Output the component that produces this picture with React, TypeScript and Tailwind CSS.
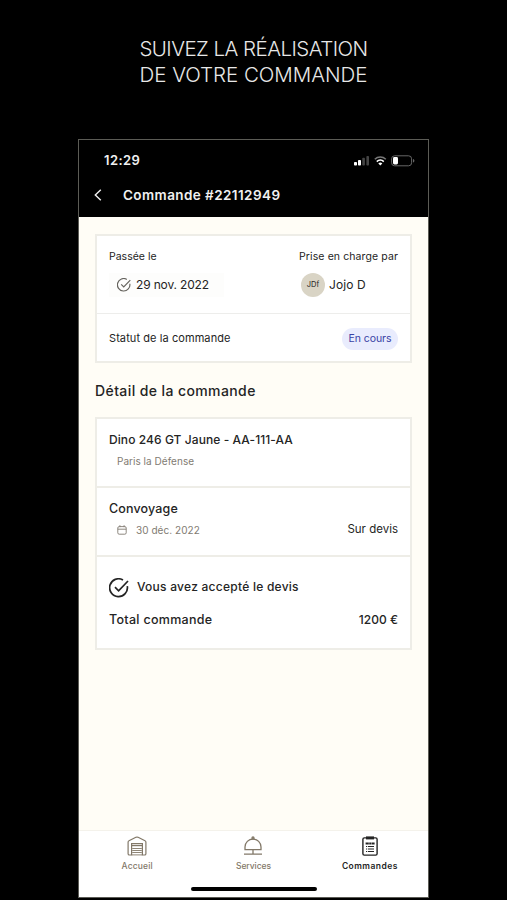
import type { ReactNode } from "react";

function BackIcon() {
  return (
    <svg viewBox="0 0 8 12" fill="none" stroke="currentColor" strokeWidth="1.4" className="mb-px h-3 w-2">
      <path d="M6.8.7 1.300 6l5.500 5.300" />
    </svg>
  );
}

function CheckCircle({ className }: { className?: string }) {
  return (
    <svg viewBox="0 0 20 20" fill="none" stroke="currentColor" strokeWidth="1.7" className={className}>
      <path d="M18.3 8.2A8.9 8.9 0 1 1 14 2" />
      <path d="M6 9.2 9.6 12.8 19 3" />
    </svg>
  );
}

function CalendarIcon() {
  return (
    <svg viewBox="0 0 10 10" fill="none" stroke="currentColor" strokeWidth="0.9" className="size-[10px]">
      <rect x="0.8" y="1.6" width="8.4" height="7.6" rx="1.4" />
      <path d="M0.8 4.2h8.4M2.9 0.2v2M7.1 0.2v2" />
    </svg>
  );
}

function GarageIcon() {
  return (
    <svg viewBox="0 0 20 20" fill="none" stroke="currentColor" strokeWidth="1.2" className="size-5">
      <path d="M2.4 19q-1.3 0-1.3-1.3V6.2q0-1 .9-1.4L8.900 1.300q1.100-.5 2.200 0L18 4.800q.9.4.9 1.400v11.500q0 1.300-1.300 1.300h-2.200V7.600H4.600V19z" />
      <path d="M4.600 9.600h10.800" />
      <path d="M5.200 12.500h9.600M5.200 14.500h9.600M5.200 16.500h9.600M4.600 18.900h10.800" strokeWidth="0.9" />
    </svg>
  );
}

function BellIcon() {
  return (
    <svg viewBox="0 0 20 20" fill="none" stroke="currentColor" strokeWidth="1.3" className="size-5">
      <path d="M2 13.6V11a8 8 0 0 1 16 0v2.6zM10 13.6v4M1 18.1h18" />
      <circle cx="10" cy="2" r="1" />
    </svg>
  );
}

function ClipboardIcon() {
  return (
    <svg viewBox="0 0 20 20" fill="none" stroke="currentColor" strokeWidth="1.4" className="size-5">
      <rect x="2.9" y="1.9" width="14.2" height="17.2" rx="1.4" />
      <path d="M6 1.9h8" strokeWidth="3" />
      <path d="M5.600 7.500h3.200M9.200 7.500h2.400M12 7.500h2.600" strokeWidth="2" />
      <path d="M6 10.500h1.200M8 10.500h6M6 13h1.200M8 13h6M6 15.500h1.200M8 15.500h6" strokeWidth="1" />
    </svg>
  );
}

function StatusIcons() {
  return (
    <svg viewBox="0 0 62 12" fill="none" className="h-3 w-[62px]">
      <rect x="1" y="7" width="3" height="3.5" rx="0.8" fill="#fff" />
      <rect x="5" y="5" width="3" height="5.5" rx="0.8" fill="#fff" />
      <rect x="9.3" y="2.8" width="2.6" height="7.7" rx="0.8" fill="#444" />
      <rect x="13.4" y="1" width="2.6" height="9.5" rx="0.8" fill="#444" />
      <path d="M21.8 4.2a7.8 7.8 0 0 1 11 0" stroke="#777" strokeWidth="1.5" />
      <path d="M23.8 6.6a5 5 0 0 1 7 0" stroke="#fff" strokeWidth="1.6" />
      <path d="m25.3 8.5 2 2 2-2a2.8 2.8 0 0 0-4 0Z" fill="#fff" />
      <rect x="38.6" y="0.8" width="20" height="10" rx="3" stroke="#666" />
      <rect x="40" y="2.1" width="5" height="7.4" rx="1.4" fill="#fff" />
      <path d="M60 4v3.6c1-.3 1.4-1 1.4-1.8S61 4.3 60 4Z" fill="#666" />
    </svg>
  );
}

function Tab({ label, className, children }: { label: string; className: string; children: ReactNode }) {
  return (
    <div className={`flex w-[117px] flex-col items-center ${className}`}>
      {children}
      <span className="mt-1 text-[8.5px] leading-3">{label}</span>
    </div>
  );
}

export default function App() {
  return (
    <div className="flex h-[900px] w-[507px] flex-col items-center overflow-hidden bg-black font-['Inter',sans-serif] whitespace-nowrap text-[#242424]">
      <h1 className="h-[139px] pt-9 text-center text-[20.5px] leading-[26px] font-light text-[#e8e8e8]">
        <span className="block tracking-[-0.54px]">SUIVEZ LA RÉALISATION</span>
        <span className="block tracking-[-0.03px]">DE VOTRE COMMANDE</span>
      </h1>

      <div className="flex h-[759px] w-[351px] flex-col border border-[#5c5c56] bg-[#fffdf6]">
        <header className="h-[77px] shrink-0 bg-black text-[#f0f0f0]">
          <div className="flex h-[41px] items-center justify-between pr-[13px] pl-[25px]">
            <span className="text-[13px] font-semibold tracking-[0.4px]">12:29</span>
            <StatusIcons />
          </div>
          <div className="flex h-[29px] items-center pl-[15px]">
            <BackIcon />
            <span className="ml-[21px] text-[13.5px] font-semibold tracking-[0.42px]">Commande #22112949</span>
          </div>
        </header>

        <main className="grow px-4 pt-[17px]">
          <section className="h-[129px] border-2 border-[#eeede7] bg-white">
            <div className="flex h-[78px] justify-between border-b border-[#ededeb] px-3 pt-[13px]">
              <div>
                <p className="text-[10.5px] leading-4">Passée le</p>
                <p className="mt-2 flex h-6 w-[115px] items-center bg-[#fdfdfc] pl-2">
                  <CheckCircle className="size-[14px] text-[#66645f]" />
                  <span className="ml-[5px] text-[12px] tracking-[-0.15px]">29 nov. 2022</span>
                </p>
              </div>
              <div>
                <p className="text-[10.5px] leading-4 tracking-[0.1px]">Prise en charge par</p>
                <p className="mt-2 flex h-6 items-center pl-[2px]">
                  <span className="flex size-6 items-center justify-center rounded-full bg-[#d9d4c5] text-[7.5px]">JDf</span>
                  <span className="ml-1 text-[12px] tracking-[0.1px]">Jojo D</span>
                </p>
              </div>
            </div>
            <div className="flex h-[49px] items-center justify-between px-3">
              <span className="text-[11px] tracking-[0.08px]">Statut de la commande</span>
              <span className="flex h-[22px] w-14 items-center justify-center rounded-full bg-[#e9ecfd] text-[10.5px] tracking-[-0.08px] text-[#3a42a5]">
                En cours
              </span>
            </div>
          </section>

          <h2 className="mt-[18px] text-[14px] leading-5 font-medium tracking-[0.4px]">Détail de la commande</h2>

          <section className="mt-[16px] h-[233px] border-2 border-[#eeede7] bg-white">
            <div className="h-[69px] border-b-2 border-[#eeede7] px-3 pt-[13px]">
              <h3 className="text-[12px] leading-4 font-medium tracking-[0.08px]">Dino 246 GT Jaune - AA-111-AA</h3>
              <p className="mt-[5px] pl-2 text-[10px] leading-4 tracking-[0.03px] text-[#817b72]">Paris la Défense</p>
            </div>
            <div className="flex h-[69px] items-start justify-between border-b-2 border-[#eeede7] px-3 pt-[13px]">
              <div>
                <h3 className="text-[12.5px] leading-4 font-medium tracking-[0.15px]">Convoyage</h3>
                <p className="mt-[5px] flex items-center pl-2 text-[10px] leading-4 text-[#817b72]">
                  <CalendarIcon />
                  <span className="ml-[9px] tracking-[0.05px]">30 déc. 2022</span>
                </p>
              </div>
              <span className="mt-5 text-[11.5px] leading-4">Sur devis</span>
            </div>
            <div className="px-3 pt-[20px]">
              <p className="flex h-5 items-center text-[12px] font-medium">
                <CheckCircle className="mt-[2px] size-5" />
                <span className="mb-px ml-2 tracking-[0.25px]">Vous avez accepté le devis</span>
              </p>
              <p className="mt-[15px] flex justify-between text-[12px] leading-4 font-medium">
                <span className="text-[12.5px] tracking-[0.3px]">Total commande</span>
                <span>1200 €</span>
              </p>
            </div>
          </section>
        </main>

        <nav className="h-[67px] shrink-0 border-t border-[#f4f2eb] bg-white">
          <div className="flex h-14 pt-[5px]">
            <Tab label="Accueil" className="font-medium tracking-[0.16px] text-[#827868]">
              <GarageIcon />
            </Tab>
            <Tab label="Services" className="font-medium tracking-[-0.05px] text-[#827868]">
              <BellIcon />
            </Tab>
            <Tab label="Commandes" className="font-semibold tracking-[0.45px] text-[#242424]">
              <ClipboardIcon />
            </Tab>
          </div>
          <div className="mx-auto h-1 w-[126px] rounded-full bg-black" />
        </nav>
      </div>
    </div>
  );
}
